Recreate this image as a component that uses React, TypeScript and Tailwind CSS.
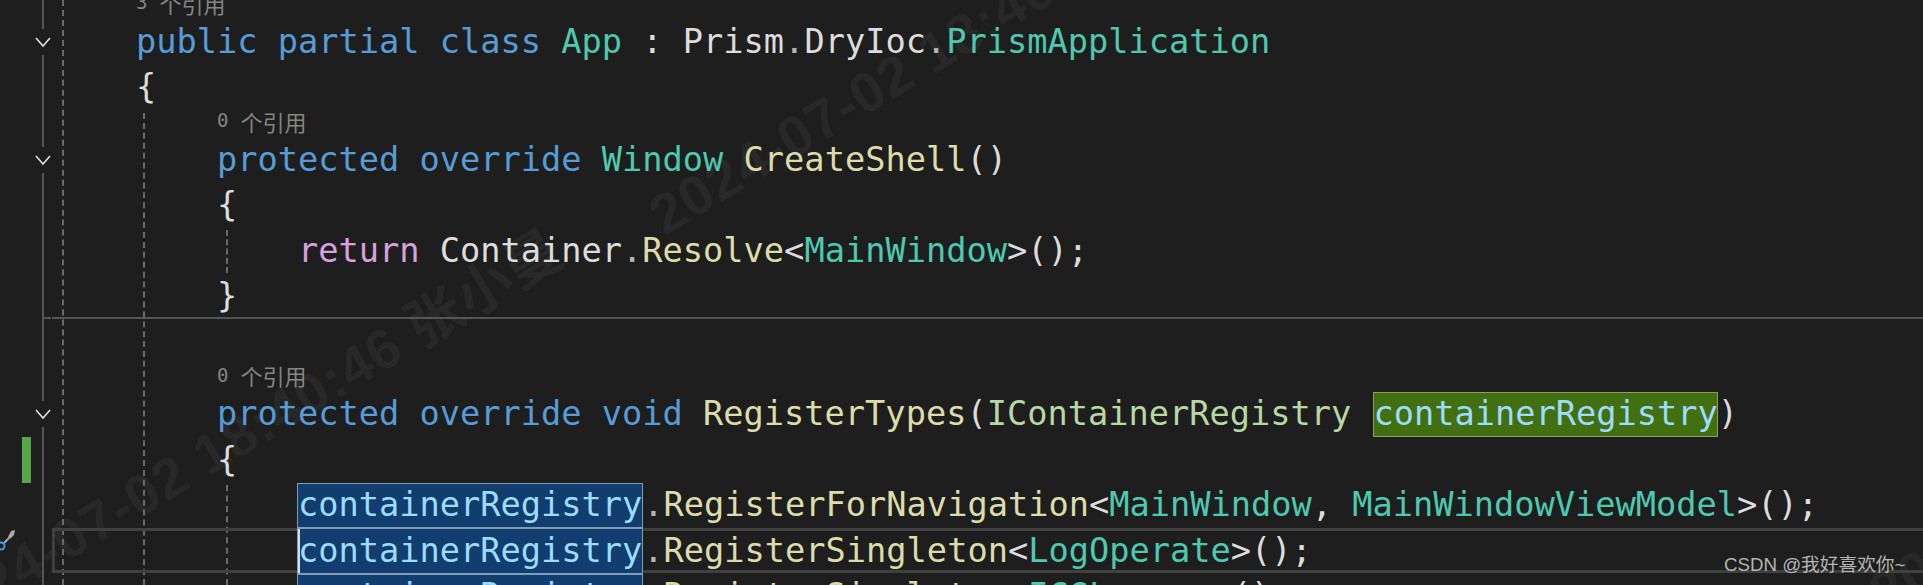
import React from 'react';

const KW = 'text-[#569cd6]';
const TY = 'text-[#4ec9b0]';
const FN = 'text-[#dcdcaa]';
const PL = 'text-[#dcdcdc]';
const DOT = 'text-[#b4b4b4]';
const RT = 'text-[#d8a0df]';
const IF = 'text-[#b8d7a3]';

const Chevron = () => (
  <svg width="16" height="26" viewBox="0 0 16 26" className="absolute left-[35px] top-1/2 -translate-y-1/2 bg-[#1e1e1e]" fill="none" stroke="#e0e0e0" strokeWidth="1.6">
    <path d="M1 9 L8 17 L15 9" />
  </svg>
);

const Lens = ({ n, indent }: { n: number; indent: string }) => (
  <div className={`h-[27px] flex items-center pb-[6px] ${indent} font-['DejaVu_Sans_Mono',monospace] text-[19px] text-[#858585]`}>
    {n}<span className="ml-[12px] text-[22px] font-['Noto_Sans_CJK_SC',sans-serif]">个引用</span>
  </div>
);

const Row = ({ indent, fold, children }: { indent: string; fold?: boolean; children?: React.ReactNode }) => (
  <div className={`relative h-[45.5px] flex items-center ${indent} whitespace-pre`}>
    {fold && <Chevron />}
    {children}
  </div>
);

const Hit = ({ caret }: { caret?: boolean }) => (
  <span className="relative -ml-[1px] h-[45.5px] flex items-center bg-[#113d6f] border border-[#7f9cb8] text-[#9cdcfe]">
    {caret && <span className="absolute left-0 top-0 bottom-0 w-[2px] bg-[#dcdcdc]" />}
    containerRegistry
  </span>
);

const MARK = "absolute -rotate-[31deg] origin-left whitespace-nowrap text-[56px] font-bold text-[#282828] font-['Liberation_Sans','Noto_Sans_CJK_SC',sans-serif] tracking-[1px]";
const GUIDE = 'absolute border-l-2 border-dashed border-[#6a6a6a]';

export default function App() {
  return (
    <div className="relative w-[1923px] h-[585px] overflow-hidden bg-[#1e1e1e]">
      {/* watermark */}
      <div className={`${MARK} left-[-70px] top-[580px]`}>2024-07-02 18:40:46 张小曼</div>
      <div className={`${MARK} left-[655px] top-[178px]`}>2024-07-02 18:40:46 张小曼</div>
      <div className={`${MARK} left-[1875px] top-[555px]`}>2024-07-02 18:40:46 张小曼</div>

      {/* margin outline + indent guides */}
      <div className="absolute left-[42px] top-0 bottom-0 w-[2px] bg-[#555555]" />
      <div className={`${GUIDE} left-[62px] top-0 bottom-0`} />
      <div className={`${GUIDE} left-[143px] top-[113px] bottom-0`} />
      <div className={`${GUIDE} left-[226px] top-[230px] h-[43px]`} />
      <div className={`${GUIDE} left-[226px] top-[485px] bottom-0`} />

      {/* method separator */}
      <div className="absolute left-[44px] w-[7px] top-[317px] h-[2px] bg-[#555555]" />
      <div className="absolute left-[52px] right-0 top-[317px] h-[2px] bg-[#555555]" />

      {/* change bar */}
      <div className="absolute left-[22px] top-[437px] w-[9px] h-[46px] bg-[#57a64a]" />

      {/* current line */}
      <div className="absolute left-[52px] right-0 top-[528px] h-[45px] border-[3px] border-r-0 border-[#404040]" />

      {/* quick action icon */}
      <svg className="absolute left-0 top-[528px]" width="16" height="26" viewBox="0 0 16 26" fill="none">
        <path d="M15 2 L11 3 L8 9 L10 11 L14 7 Z" fill="#a8a8a8" />
        <path d="M9 10 L4 15" stroke="#a8a8a8" strokeWidth="2" />
        <circle cx="1" cy="18" r="3.5" stroke="#4a9be0" strokeWidth="2" />
      </svg>

      <div className="relative -mt-[8px] font-['DejaVu_Sans_Mono',monospace] text-[33.65px] leading-none">
        <Lens n={3} indent="pl-[136px]" />
        <Row indent="pl-[136px]" fold>
          <span className={KW}>public partial class </span>
          <span className={TY}>App</span>
          <span className={PL}> : Prism</span>
          <span className={DOT}>.</span>
          <span className={PL}>DryIoc</span>
          <span className={DOT}>.</span>
          <span className={TY}>PrismApplication</span>
        </Row>
        <Row indent="pl-[136px]"><span className={PL}>{'{'}</span></Row>
        <Lens n={0} indent="pl-[217px]" />
        <Row indent="pl-[217px]" fold>
          <span className={KW}>protected override </span>
          <span className={TY}>Window</span>
          <span className={FN}> CreateShell</span>
          <span className={PL}>()</span>
        </Row>
        <Row indent="pl-[217px]"><span className={PL}>{'{'}</span></Row>
        <Row indent="pl-[298px]">
          <span className={RT}>return </span>
          <span className={PL}>Container</span>
          <span className={DOT}>.</span>
          <span className={FN}>Resolve</span>
          <span className={PL}>&lt;</span>
          <span className={TY}>MainWindow</span>
          <span className={PL}>&gt;();</span>
        </Row>
        <Row indent="pl-[217px]"><span className={PL}>{'}'}</span></Row>
        <Row indent="pl-[217px]" />
        <Lens n={0} indent="pl-[217px]" />
        <Row indent="pl-[217px]" fold>
          <span className={KW}>protected override void </span>
          <span className={FN}>RegisterTypes</span>
          <span className={PL}>(</span>
          <span className={IF}>IContainerRegistry</span>
          <span className={PL}> </span>
          <span className="ml-[2px] h-[45.5px] flex items-center bg-[#426f0f] outline outline-1 -outline-offset-1 outline-[#8aa060] text-[#9cdcfe]">containerRegistry</span>
          <span className={PL}>)</span>
        </Row>
        <Row indent="pl-[217px]"><span className={PL}>{'{'}</span></Row>
        <Row indent="pl-[298px]">
          <Hit />
          <span className={DOT}>.</span>
          <span className={FN}>RegisterForNavigation</span>
          <span className={PL}>&lt;</span>
          <span className={TY}>MainWindow</span>
          <span className={PL}>, </span>
          <span className={TY}>MainWindowViewModel</span>
          <span className={PL}>&gt;();</span>
        </Row>
        <Row indent="pl-[298px]">
          <Hit caret />
          <span className={DOT}>.</span>
          <span className={FN}>RegisterSingleton</span>
          <span className={PL}>&lt;</span>
          <span className={TY}>LogOperate</span>
          <span className={PL}>&gt;();</span>
        </Row>
        <Row indent="pl-[298px]">
          <Hit />
          <span className={DOT}>.</span>
          <span className={FN}>RegisterSingleton</span>
          <span className={PL}>&lt;</span>
          <span className={TY}>ICGLogger</span>
          <span className={PL}>&gt;();</span>
        </Row>
      </div>

      {/* csdn mark */}
      <div className="absolute left-[1724px] top-[555px] text-[18.7px] leading-[20px] text-[#b4b4b4] font-['Liberation_Sans','Noto_Sans_CJK_SC',sans-serif]">CSDN @我好喜欢你~</div>
    </div>
  );
}
